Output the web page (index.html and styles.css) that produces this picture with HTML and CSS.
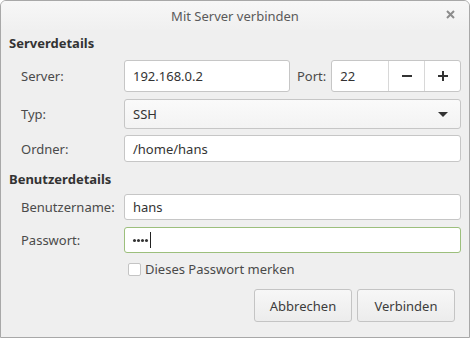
FILE: index.html
```html
<!DOCTYPE html>
<html lang="de">
  <head>
    <meta charset="UTF-8" />
    <meta name="viewport" content="width=device-width, initial-scale=1.0" />
    <title>Mit Server verbinden</title>
    <link rel="stylesheet" href="styles.css">
  </head>
  <body>
    <div class="window">
      <div class="titlebar">
        <span class="title">Mit Server verbinden</span>
        <button class="close" aria-label="Schließen">
          <svg width="9" height="9" viewBox="0 0 9 9">
            <path d="M1 1 L8 8 M8 1 L1 8" stroke="#8c8c8c" stroke-width="2" />
          </svg>
        </button>
      </div>

      <div class="content">
        <h3 class="section">Serverdetails</h3>
        <div class="form-grid">
          <label class="row-server">Server:</label>
          <div class="field row-server server-field">
            <div class="entry server-entry">192.168.0.2</div>
            <label class="port-label">Port:</label>
            <div class="spin">
              <div class="spin-value">22</div>
              <button class="spin-btn">
                <svg width="12" height="12" viewBox="0 0 12 12">
                  <path d="M1 6 H11" stroke="#333" stroke-width="2" />
                </svg>
              </button>
              <button class="spin-btn">
                <svg width="12" height="12" viewBox="0 0 12 12">
                  <path d="M1 6 H11 M6 1 V11" stroke="#333" stroke-width="2" />
                </svg>
              </button>
            </div>
          </div>

          <label class="row-typ">Typ:</label>
          <div class="combo row-typ">
            <span>SSH</span>
            <svg width="10" height="5" viewBox="0 0 10 5">
              <path d="M0 0 H10 L5 5 Z" fill="#333" />
            </svg>
          </div>

          <label class="row-small">Ordner:</label>
          <div class="entry row-small">/home/hans</div>
        </div>

        <h3 class="section section-user">Benutzerdetails</h3>
        <div class="form-grid">
          <label class="row-user">Benutzername:</label>
          <div class="entry row-user">hans</div>

          <label class="row-user">Passwort:</label>
          <div class="entry row-user focused">
            <span class="dot"></span><span class="dot"></span><span class="dot"></span><span class="dot"></span><span class="caret"></span>
          </div>
        </div>

        <label class="check">
          <span class="checkbox"></span>
          Dieses Passwort merken
        </label>

        <div class="actions">
          <button class="btn">Abbrechen</button>
          <button class="btn">Verbinden</button>
        </div>
      </div>
    </div>
  </body>
</html>
```

FILE: styles.css
```css
* {
  box-sizing: border-box;
}
body {
  margin: 0;
  font-family: "Noto Sans", "DejaVu Sans", sans-serif;
  font-size: 13px;
  color: #3c3c3c;
  background-color: #ffffff;
}
.window {
  width: 470px;
  height: 338px;
  background-color: #efefef;
  border: 1px solid #a8a8a8;
  border-radius: 6px 6px 0 0;
  overflow: hidden;
}
.titlebar {
  height: 29px;
  display: flex;
  align-items: center;
  justify-content: center;
  position: relative;
  background: linear-gradient(#f7f7f7, #f0f0f0);
}
.title {
  color: #5a5a5a;
  font-size: 13px;
}
.close {
  position: absolute;
  right: 13px;
  top: 8px;
  width: 11px;
  height: 11px;
  padding: 1px;
  border: none;
  background: none;
  display: flex;
}
.content {
  padding: 0 8px 0 8px;
}
.section {
  margin: 5px 0 9px 0;
  height: 16px;
  line-height: 16px;
  font-size: 13px;
  font-weight: bold;
  color: #333;
}
.section-user {
  margin: 9px 0 7px 0;
}
.form-grid {
  display: grid;
  grid-template-columns: 115px 337px;
  row-gap: 7px;
  align-items: center;
}
.form-grid label {
  padding-left: 12px;
  color: #4a4a4a;
}
.row-server {
  height: 32px;
}
.row-typ {
  height: 30px;
}
.row-small {
  height: 27px;
  margin-top: -1px;
}
.row-user {
  height: 26px;
}
.form-grid label.row-server,
.form-grid label.row-typ,
.form-grid label.row-small,
.form-grid label.row-user {
  display: flex;
  align-items: center;
}
.entry,
.spin,
.combo {
  background-color: #fff;
  border: 1px solid #c6c6c6;
  border-radius: 3px;
  display: flex;
  align-items: center;
  padding-left: 8px;
  color: #333;
}
.server-field {
  display: flex;
  align-items: stretch;
}
.server-entry {
  width: 166px;
}
.form-grid label.port-label {
  display: flex;
  align-items: center;
  padding: 0 5px 0 7px;
  color: #4a4a4a;
}
.spin {
  flex: 1;
  padding-left: 0;
  align-items: stretch;
}
.spin-value {
  flex: 1;
  display: flex;
  align-items: center;
  padding-left: 8px;
}
.spin-btn {
  width: 36px;
  border: none;
  border-left: 1px solid #d8d8d8;
  background: none;
  padding: 0;
  display: flex;
  align-items: center;
  justify-content: center;
}
.combo {
  justify-content: space-between;
  padding-right: 12px;
  background: linear-gradient(#fafafa, #f3f3f3);
}
.focused {
  border-color: #9cbf7c;
}
.dot {
  width: 3px;
  height: 3px;
  margin-right: 1px;
  border-radius: 50%;
  background-color: #333;
}
.caret {
  width: 1px;
  height: 16px;
  margin-left: 1px;
  background-color: #222;
}
.check {
  display: flex;
  align-items: center;
  gap: 4px;
  margin: 9px 0 0 119px;
  color: #4a4a4a;
  height: 14px;
}
.checkbox {
  width: 13px;
  height: 13px;
  border: 1px solid #c4c4c4;
  border-radius: 2px;
  background-color: #fff;
}
.actions {
  display: flex;
  justify-content: flex-end;
  gap: 5px;
  margin: 13px 6px 0 0;
}
.btn {
  width: 98px;
  height: 33px;
  font-family: inherit;
  font-size: 13px;
  color: #3c3c3c;
  border: 1px solid #c4c4c4;
  border-radius: 3px;
  background: linear-gradient(#f7f7f7, #ececec);
}
```
